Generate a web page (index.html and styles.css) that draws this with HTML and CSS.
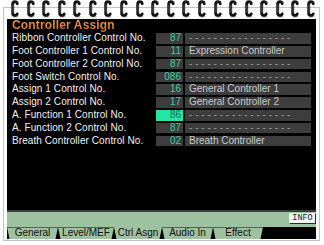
FILE: index.html
```html
<!DOCTYPE html>
<html>
<head>
<meta charset="utf-8">
<link rel="stylesheet" href="styles.css">
</head>
<body>
<div class="rings">
<svg class="ring" viewBox="0 0 10 18"><ellipse cx="5.5" cy="16.8" rx="3.4" ry="0.9" fill="#c4c4c4"/><path d="M7.2 3.8 C7.2 1 2.7 1 2.7 4 L2.7 13.3 C2.7 15.9 6.5 16.1 7.2 14" fill="none" stroke="#141414" stroke-width="2.9" stroke-linecap="round"/><path d="M3.1 4.8 L3.1 12.6" stroke="#808080" stroke-width="0.7"/></svg>
<svg class="ring" viewBox="0 0 10 18"><ellipse cx="5.5" cy="16.8" rx="3.4" ry="0.9" fill="#c4c4c4"/><path d="M7.2 3.8 C7.2 1 2.7 1 2.7 4 L2.7 13.3 C2.7 15.9 6.5 16.1 7.2 14" fill="none" stroke="#141414" stroke-width="2.9" stroke-linecap="round"/><path d="M3.1 4.8 L3.1 12.6" stroke="#808080" stroke-width="0.7"/></svg>
<svg class="ring" viewBox="0 0 10 18"><ellipse cx="5.5" cy="16.8" rx="3.4" ry="0.9" fill="#c4c4c4"/><path d="M7.2 3.8 C7.2 1 2.7 1 2.7 4 L2.7 13.3 C2.7 15.9 6.5 16.1 7.2 14" fill="none" stroke="#141414" stroke-width="2.9" stroke-linecap="round"/><path d="M3.1 4.8 L3.1 12.6" stroke="#808080" stroke-width="0.7"/></svg>
<svg class="ring" viewBox="0 0 10 18"><ellipse cx="5.5" cy="16.8" rx="3.4" ry="0.9" fill="#c4c4c4"/><path d="M7.2 3.8 C7.2 1 2.7 1 2.7 4 L2.7 13.3 C2.7 15.9 6.5 16.1 7.2 14" fill="none" stroke="#141414" stroke-width="2.9" stroke-linecap="round"/><path d="M3.1 4.8 L3.1 12.6" stroke="#808080" stroke-width="0.7"/></svg>
<svg class="ring" viewBox="0 0 10 18"><ellipse cx="5.5" cy="16.8" rx="3.4" ry="0.9" fill="#c4c4c4"/><path d="M7.2 3.8 C7.2 1 2.7 1 2.7 4 L2.7 13.3 C2.7 15.9 6.5 16.1 7.2 14" fill="none" stroke="#141414" stroke-width="2.9" stroke-linecap="round"/><path d="M3.1 4.8 L3.1 12.6" stroke="#808080" stroke-width="0.7"/></svg>
<svg class="ring" viewBox="0 0 10 18"><ellipse cx="5.5" cy="16.8" rx="3.4" ry="0.9" fill="#c4c4c4"/><path d="M7.2 3.8 C7.2 1 2.7 1 2.7 4 L2.7 13.3 C2.7 15.9 6.5 16.1 7.2 14" fill="none" stroke="#141414" stroke-width="2.9" stroke-linecap="round"/><path d="M3.1 4.8 L3.1 12.6" stroke="#808080" stroke-width="0.7"/></svg>
<svg class="ring" viewBox="0 0 10 18"><ellipse cx="5.5" cy="16.8" rx="3.4" ry="0.9" fill="#c4c4c4"/><path d="M7.2 3.8 C7.2 1 2.7 1 2.7 4 L2.7 13.3 C2.7 15.9 6.5 16.1 7.2 14" fill="none" stroke="#141414" stroke-width="2.9" stroke-linecap="round"/><path d="M3.1 4.8 L3.1 12.6" stroke="#808080" stroke-width="0.7"/></svg>
<svg class="ring" viewBox="0 0 10 18"><ellipse cx="5.5" cy="16.8" rx="3.4" ry="0.9" fill="#c4c4c4"/><path d="M7.2 3.8 C7.2 1 2.7 1 2.7 4 L2.7 13.3 C2.7 15.9 6.5 16.1 7.2 14" fill="none" stroke="#141414" stroke-width="2.9" stroke-linecap="round"/><path d="M3.1 4.8 L3.1 12.6" stroke="#808080" stroke-width="0.7"/></svg>
<svg class="ring" viewBox="0 0 10 18"><ellipse cx="5.5" cy="16.8" rx="3.4" ry="0.9" fill="#c4c4c4"/><path d="M7.2 3.8 C7.2 1 2.7 1 2.7 4 L2.7 13.3 C2.7 15.9 6.5 16.1 7.2 14" fill="none" stroke="#141414" stroke-width="2.9" stroke-linecap="round"/><path d="M3.1 4.8 L3.1 12.6" stroke="#808080" stroke-width="0.7"/></svg>
<svg class="ring" viewBox="0 0 10 18"><ellipse cx="5.5" cy="16.8" rx="3.4" ry="0.9" fill="#c4c4c4"/><path d="M7.2 3.8 C7.2 1 2.7 1 2.7 4 L2.7 13.3 C2.7 15.9 6.5 16.1 7.2 14" fill="none" stroke="#141414" stroke-width="2.9" stroke-linecap="round"/><path d="M3.1 4.8 L3.1 12.6" stroke="#808080" stroke-width="0.7"/></svg>
<svg class="ring" viewBox="0 0 10 18"><ellipse cx="5.5" cy="16.8" rx="3.4" ry="0.9" fill="#c4c4c4"/><path d="M7.2 3.8 C7.2 1 2.7 1 2.7 4 L2.7 13.3 C2.7 15.9 6.5 16.1 7.2 14" fill="none" stroke="#141414" stroke-width="2.9" stroke-linecap="round"/><path d="M3.1 4.8 L3.1 12.6" stroke="#808080" stroke-width="0.7"/></svg>
<svg class="ring" viewBox="0 0 10 18"><ellipse cx="5.5" cy="16.8" rx="3.4" ry="0.9" fill="#c4c4c4"/><path d="M7.2 3.8 C7.2 1 2.7 1 2.7 4 L2.7 13.3 C2.7 15.9 6.5 16.1 7.2 14" fill="none" stroke="#141414" stroke-width="2.9" stroke-linecap="round"/><path d="M3.1 4.8 L3.1 12.6" stroke="#808080" stroke-width="0.7"/></svg>
<svg class="ring" viewBox="0 0 10 18"><ellipse cx="5.5" cy="16.8" rx="3.4" ry="0.9" fill="#c4c4c4"/><path d="M7.2 3.8 C7.2 1 2.7 1 2.7 4 L2.7 13.3 C2.7 15.9 6.5 16.1 7.2 14" fill="none" stroke="#141414" stroke-width="2.9" stroke-linecap="round"/><path d="M3.1 4.8 L3.1 12.6" stroke="#808080" stroke-width="0.7"/></svg>
<svg class="ring" viewBox="0 0 10 18"><ellipse cx="5.5" cy="16.8" rx="3.4" ry="0.9" fill="#c4c4c4"/><path d="M7.2 3.8 C7.2 1 2.7 1 2.7 4 L2.7 13.3 C2.7 15.9 6.5 16.1 7.2 14" fill="none" stroke="#141414" stroke-width="2.9" stroke-linecap="round"/><path d="M3.1 4.8 L3.1 12.6" stroke="#808080" stroke-width="0.7"/></svg>
<svg class="ring" viewBox="0 0 10 18"><ellipse cx="5.5" cy="16.8" rx="3.4" ry="0.9" fill="#c4c4c4"/><path d="M7.2 3.8 C7.2 1 2.7 1 2.7 4 L2.7 13.3 C2.7 15.9 6.5 16.1 7.2 14" fill="none" stroke="#141414" stroke-width="2.9" stroke-linecap="round"/><path d="M3.1 4.8 L3.1 12.6" stroke="#808080" stroke-width="0.7"/></svg>
<svg class="ring" viewBox="0 0 10 18"><ellipse cx="5.5" cy="16.8" rx="3.4" ry="0.9" fill="#c4c4c4"/><path d="M7.2 3.8 C7.2 1 2.7 1 2.7 4 L2.7 13.3 C2.7 15.9 6.5 16.1 7.2 14" fill="none" stroke="#141414" stroke-width="2.9" stroke-linecap="round"/><path d="M3.1 4.8 L3.1 12.6" stroke="#808080" stroke-width="0.7"/></svg>
<svg class="ring" viewBox="0 0 10 18"><ellipse cx="5.5" cy="16.8" rx="3.4" ry="0.9" fill="#c4c4c4"/><path d="M7.2 3.8 C7.2 1 2.7 1 2.7 4 L2.7 13.3 C2.7 15.9 6.5 16.1 7.2 14" fill="none" stroke="#141414" stroke-width="2.9" stroke-linecap="round"/><path d="M3.1 4.8 L3.1 12.6" stroke="#808080" stroke-width="0.7"/></svg>
<svg class="ring" viewBox="0 0 10 18"><ellipse cx="5.5" cy="16.8" rx="3.4" ry="0.9" fill="#c4c4c4"/><path d="M7.2 3.8 C7.2 1 2.7 1 2.7 4 L2.7 13.3 C2.7 15.9 6.5 16.1 7.2 14" fill="none" stroke="#141414" stroke-width="2.9" stroke-linecap="round"/><path d="M3.1 4.8 L3.1 12.6" stroke="#808080" stroke-width="0.7"/></svg>
<svg class="ring" viewBox="0 0 10 18"><ellipse cx="5.5" cy="16.8" rx="3.4" ry="0.9" fill="#c4c4c4"/><path d="M7.2 3.8 C7.2 1 2.7 1 2.7 4 L2.7 13.3 C2.7 15.9 6.5 16.1 7.2 14" fill="none" stroke="#141414" stroke-width="2.9" stroke-linecap="round"/><path d="M3.1 4.8 L3.1 12.6" stroke="#808080" stroke-width="0.7"/></svg>
<svg class="ring" viewBox="0 0 10 18"><ellipse cx="5.5" cy="16.8" rx="3.4" ry="0.9" fill="#c4c4c4"/><path d="M7.2 3.8 C7.2 1 2.7 1 2.7 4 L2.7 13.3 C2.7 15.9 6.5 16.1 7.2 14" fill="none" stroke="#141414" stroke-width="2.9" stroke-linecap="round"/><path d="M3.1 4.8 L3.1 12.6" stroke="#808080" stroke-width="0.7"/></svg>
</div>
<div class="page">
  <div class="screen">
    <div class="main">
      <div class="title">Controller Assign</div>
      <div class="rows">
        <div class="row"><span class="label">Ribbon Controller Control No.</span><span class="num">87</span><span class="name dash">-----------------</span></div>
        <div class="row"><span class="label">Foot Controller 1 Control No.</span><span class="num">11</span><span class="name">Expression Controller</span></div>
        <div class="row"><span class="label">Foot Controller 2 Control No.</span><span class="num">87</span><span class="name dash">-----------------</span></div>
        <div class="row"><span class="label">Foot Switch Control No.</span><span class="num">086</span><span class="name dash">-----------------</span></div>
        <div class="row"><span class="label">Assign 1 Control No.</span><span class="num">16</span><span class="name">General Controller 1</span></div>
        <div class="row"><span class="label">Assign 2 Control No.</span><span class="num">17</span><span class="name">General Controller 2</span></div>
        <div class="row"><span class="label">A. Function 1 Control No.</span><span class="num sel">86</span><span class="name dash">-----------------</span></div>
        <div class="row"><span class="label">A. Function 2 Control No.</span><span class="num">87</span><span class="name dash">-----------------</span></div>
        <div class="row"><span class="label">Breath Controller Control No.</span><span class="num">02</span><span class="name">Breath Controller</span></div>
      </div>
    </div>
    <div class="band"><span class="info">INFO</span></div>
    <div class="tabs">
      <span class="tab">General</span>
      <span class="tab">Level/MEF</span>
      <span class="tab sel">Ctrl Asgn</span>
      <span class="tab">Audio In</span>
      <span class="tab">Effect</span>
    </div>
  </div>
</div>
</body>
</html>
```
FILE: styles.css
```css
* { box-sizing: border-box; }
html, body { margin: 0; padding: 0; background: #fff; }
body {
  width: 324px;
  height: 245px;
  overflow: hidden;
  position: relative;
  font-family: "Liberation Sans", Arial, sans-serif;
}
.rings {
  position: absolute;
  top: 0;
  left: 10px;
  width: 306px;
  height: 18px;
  display: flex;
  justify-content: space-between;
  z-index: 2;
}
.ring { width: 10px; height: 18px; display: block; }

.page {
  margin: 7px 0 0 3px;
  width: 317px;
  border: 1px solid #c4c4c4;
  padding: 11px 3px 1px 3px;
}
.screen {
  display: flex;
  flex-direction: column;
  height: 220px;
}
.main {
  background: #000;
  height: 191px;
  padding: 0 5px;
}
.title {
  height: 13px;
  line-height: 13px;
  font-size: 12px;
  font-weight: bold;
  letter-spacing: 0.15px;
  background: linear-gradient(#f6a458, #d8692a);
  -webkit-background-clip: text;
  background-clip: text;
  color: transparent;
  width: max-content;
}
.rows {
  display: flex;
  flex-direction: column;
  gap: 2.3px;
  margin-top: 1.3px;
}
.row {
  display: flex;
  height: 10.5px;
  font-size: 10px;
  line-height: 10.5px;
}
.label {
  flex: 1;
  color: #f2f2f2;
  white-space: nowrap;
  letter-spacing: 0.08px;
}
.num {
  width: 27px;
  background: #3d3d3d;
  color: #3ccca2;
  text-align: right;
  padding-right: 2px;
}
.num.sel {
  background: #24e4a6;
  color: #0f6c50;
}
.name {
  width: 126px;
  margin-left: 2px;
  background: #3d3d3d;
  color: #cacaca;
  padding-left: 4px;
  white-space: nowrap;
  overflow: hidden;
}
.name.dash {
  color: #9a9a9a;
  letter-spacing: 2.8px;
}
.band {
  height: 17px;
  border-top: 2px solid #3a3f3a;
  background: #9ec2a0;
  display: flex;
  justify-content: flex-end;
  align-items: flex-start;
  padding-top: 1px;
}
.info {
  width: 27px;
  height: 11px;
  background: #f4f4f4;
  border: 1px solid;
  border-color: #fff #2a2a2a #2a2a2a #fff;
  font-family: "Liberation Mono", monospace;
  font-size: 8.5px;
  line-height: 9px;
  text-align: center;
  color: #1a1a1a;
}
.tabs {
  height: 12px;
  background: #000;
  display: grid;
  grid-template-columns: 51px 56px 48px 51px 50px 1fr;
}
.tab {
  background: #9ec2a0;
  clip-path: polygon(0 0, 100% 0, calc(100% - 2.5px) 100%, 2.5px 100%);
  border-top: 1px solid #4e6652;
  font-size: 10px;
  line-height: 10px;
  text-align: center;
  color: #111;
  white-space: nowrap;
}
.tab.sel {
  border-top-color: transparent;
}
```
